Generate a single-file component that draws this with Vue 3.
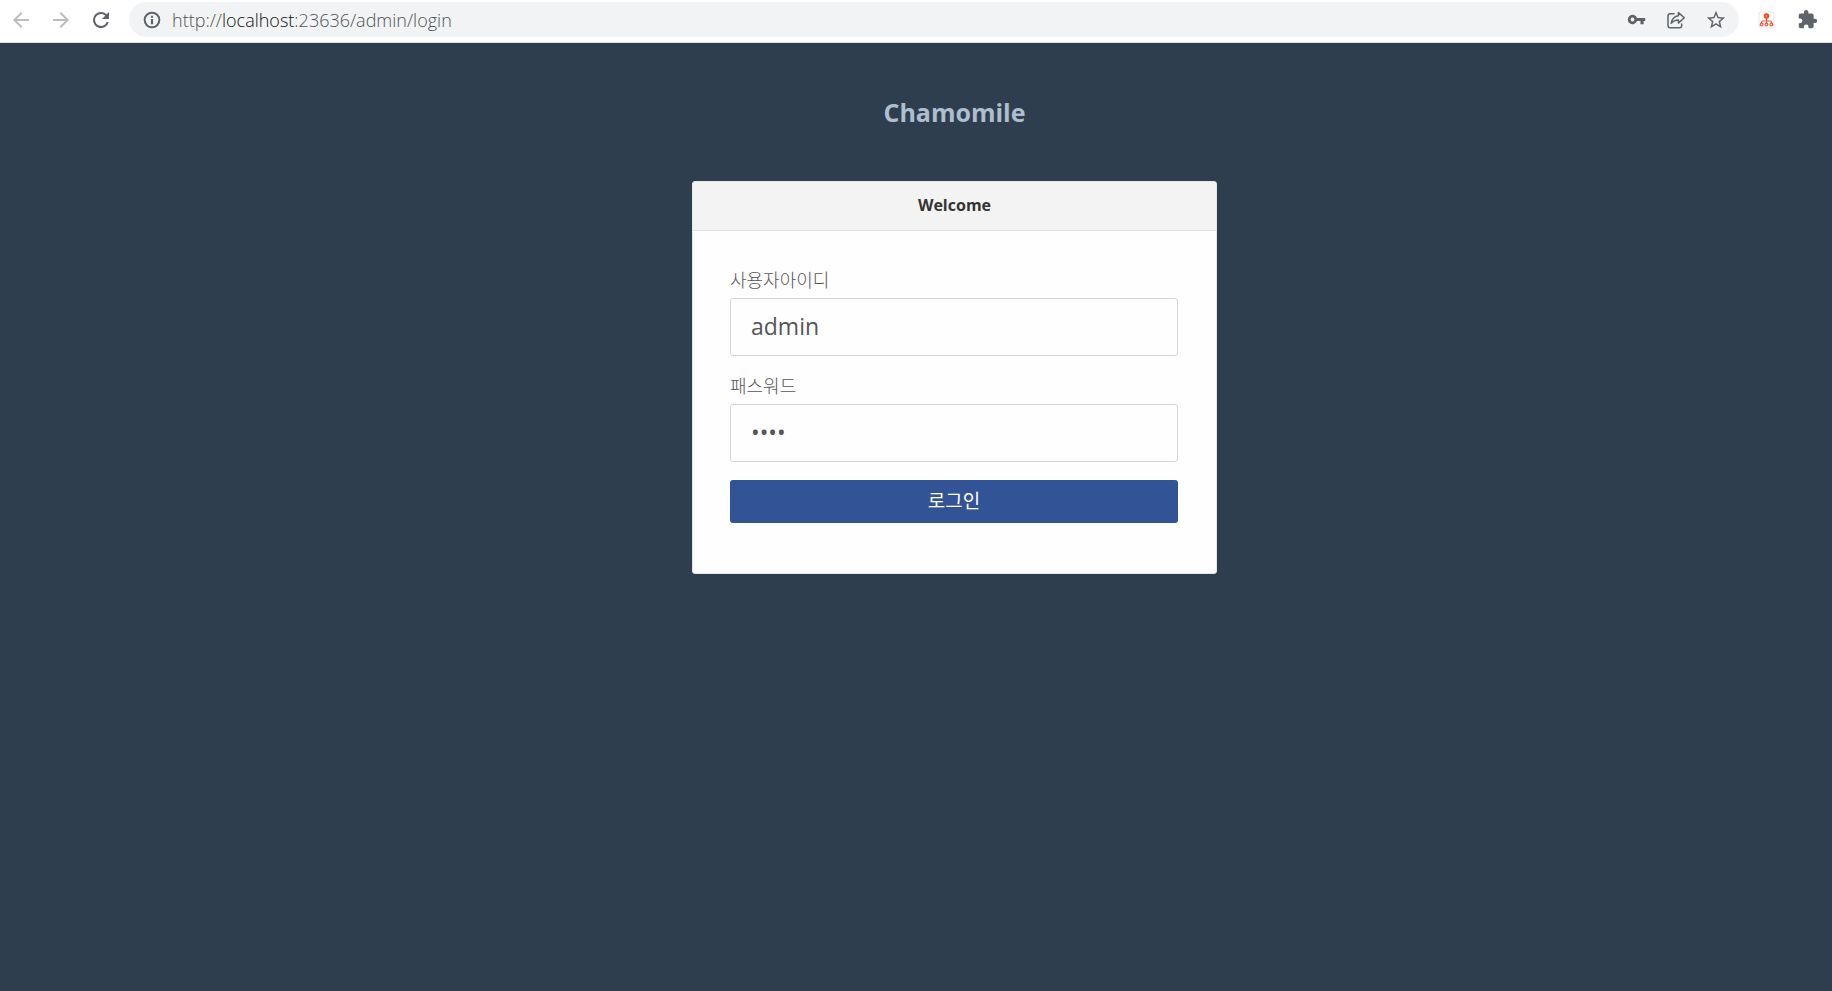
<script setup>
import { ref } from 'vue'

const userId = ref('admin')
const password = ref('1234')
</script>

<template>
  <div class="browser">
    <header class="toolbar">
      <button class="icon-button disabled" type="button" aria-label="Back">
        <svg width="24" height="24" viewBox="0 0 24 24"><path d="M20 11H7.83l5.59-5.59L12 4l-8 8 8 8 1.41-1.41L7.83 13H20z" /></svg>
      </button>
      <button class="icon-button disabled" type="button" aria-label="Forward">
        <svg width="24" height="24" viewBox="0 0 24 24"><path d="M12 4l-1.41 1.41L16.17 11H4v2h12.17l-5.58 5.59L12 20l8-8z" /></svg>
      </button>
      <button class="icon-button" type="button" aria-label="Reload">
        <svg width="24" height="24" viewBox="0 0 24 24"><path d="M17.65 6.35A7.96 7.96 0 0 0 12 4a8 8 0 1 0 7.73 10h-2.08A6 6 0 1 1 12 6c1.66 0 3.14.69 4.22 1.78L13 11h7V4z" /></svg>
      </button>
      <div class="address">
        <button class="icon-button" type="button" aria-label="Site information">
          <svg width="20" height="20" viewBox="0 0 24 24"><path d="M12 2a10 10 0 1 0 0 20 10 10 0 0 0 0-20zm0 17.600a7.600 7.600 0 1 1 0-15.200 7.600 7.600 0 0 1 0 15.200zM10.700 10.800h2.600V17h-2.600zM10.700 7h2.600v2.400h-2.600z" /></svg>
        </button>
        <div class="url">http://<span class="host">localhost</span>:23636/admin/login</div>
        <div class="actions">
          <button class="icon-button" type="button" aria-label="Passwords">
            <svg width="19" height="19" viewBox="0 0 24 24"><path d="M12.65 10A6 6 0 1 0 12.65 14H17v4h4v-4h2v-4zM7 14.4a2.4 2.4 0 1 1 0-4.8 2.4 2.4 0 0 1 0 4.8z" /></svg>
          </button>
          <button class="icon-button" type="button" aria-label="Share">
            <svg class="outline" width="20" height="20" viewBox="0 0 20 20"><path d="M8 3.800H4.300Q2 3.800 2 6.100v9.400q0 2.300 2.300 2.300h9.100q2.300 0 2.300-2.300v-1.500" /><path d="M12.400 2.600v3.200C8.600 6.200 6 8.800 5.200 13.400c2-2.500 4.200-3.500 7.200-3.500v3.200l5.900-5.300z" /></svg>
          </button>
          <button class="icon-button" type="button" aria-label="Bookmark">
            <svg width="22" height="22" viewBox="0 0 24 24"><path d="M22 9.24l-7.19-.62L12 2 9.19 8.63 2 9.24l5.46 4.73L5.82 21 12 17.27 18.18 21l-1.63-7.03zM12 15.4l-3.76 2.27 1-4.28-3.32-2.88 4.38-.38L12 6.1l1.71 4.04 4.38.38-3.32 2.88 1 4.28z" /></svg>
          </button>
        </div>
      </div>
      <button class="icon-button" type="button" aria-label="Site map extension">
        <svg class="extension" width="18" height="18" viewBox="0 0 18 18">
          <rect class="tile" x="1" y="1" width="15" height="16" rx="2" />
          <circle class="solid" cx="8.500" cy="5" r="2.800" />
          <path d="M8.500 7v5.500M3.600 12.500v-1.500q0-1 1-1h7.800q1 0 1 1v1.500" />
          <circle cx="3.600" cy="13.600" r="1.400" /><circle cx="8.500" cy="13.600" r="1.400" /><circle cx="13.400" cy="13.600" r="1.400" />
          <circle class="dot" cx="8.500" cy="5" r="0.800" />
        </svg>
      </button>
      <button class="icon-button" type="button" aria-label="Extensions">
        <svg width="21" height="21" viewBox="0 0 24 24"><path d="M20.500 11H19V7a2 2 0 0 0-2-2h-4V3.500a2.500 2.500 0 0 0-5 0V5H4a2 2 0 0 0-2 2v3.800h1.500a2.700 2.700 0 0 1 0 5.400H2V20a2 2 0 0 0 2 2h3.800v-1.500a2.700 2.700 0 0 1 5.400 0V22H17a2 2 0 0 0 2-2v-4h1.500a2.500 2.500 0 0 0 0-5z" /></svg>
      </button>
    </header>

    <main class="page">
      <h1 class="brand">Chamomile</h1>
      <section class="card">
        <h2 class="card-title">Welcome</h2>
        <form class="form" @submit.prevent>
          <div class="field">
            <label for="user-id">사용자아이디</label>
            <input id="user-id" v-model="userId" type="text" autocomplete="username">
          </div>
          <div class="field">
            <label for="password">패스워드</label>
            <input id="password" v-model="password" type="password" autocomplete="current-password">
          </div>
          <button class="submit" type="submit">로그인</button>
        </form>
      </section>
    </main>
  </div>
</template>

<style>
body {
  background: #2f3e4e;
}
</style>

<style scoped>
.browser {
  display: flex;
  flex-direction: column;
  min-height: 100vh;
  font-family: "Open Sans", "Noto Sans CJK KR", sans-serif;
}

.toolbar {
  display: flex;
  align-items: center;
  gap: 16px;
  box-sizing: border-box;
  height: 43px;
  padding: 0 13px 3px 9px;
  border-bottom: 1px solid #dfe3e3;
  background: #fff;
}

.icon-button {
  display: flex;
  align-items: center;
  justify-content: center;
  flex: none;
  width: 24px;
  height: 24px;
  padding: 0;
  border: 0;
  background: none;
  color: #5f6368;
}

.icon-button svg {
  fill: currentColor;
}

.icon-button.disabled {
  color: #babcbe;
}

.icon-button .outline {
  fill: none;
  stroke: currentColor;
  stroke-width: 1.5;
  stroke-linejoin: round;
  stroke-linecap: round;
}

.icon-button .extension {
  fill: none;
  stroke: #f0583a;
  stroke-width: 1.2;
}

.extension .tile {
  fill: #fff;
  stroke: #e6e6e6;
  stroke-width: 1;
}

.extension .solid {
  fill: #f0482a;
  stroke: none;
}

.extension .dot {
  fill: #fbb4a4;
  stroke: none;
}

.address {
  display: flex;
  align-items: center;
  flex: 1;
  gap: 8px;
  box-sizing: border-box;
  height: 35px;
  padding: 0 11px;
  border-radius: 18px;
  background: #f1f3f4;
}

.url {
  flex: 1;
  font-size: 18px;
  line-height: 24px;
  font-weight: 300;
  color: #505458;
}

.host {
  color: #101114;
}

.actions {
  display: flex;
  gap: 16px;
}

.page {
  display: flex;
  flex-direction: column;
  align-items: center;
  flex: 1;
  padding: 48px 0 48px 77px;
  background: #2f3e4e;
}

.brand {
  margin: 0 0 48px;
  font-size: 25px;
  line-height: 42px;
  font-weight: 700;
  color: #adbece;
}

.card {
  box-sizing: border-box;
  width: 100%;
  max-width: 525px;
  border: 1px solid #e4e6e7;
  border-radius: 3px;
  background: #fefefe;
  overflow: hidden;
}

.card-title {
  margin: 0;
  padding: 11px 12px 13px;
  border-bottom: 1px solid #e2e2e2;
  background: #f3f3f3;
  font-size: 16px;
  line-height: 24px;
  font-weight: 700;
  text-align: center;
  color: #333;
}

.form {
  padding: 37px 38px 50px 37px;
}

.field {
  display: flex;
  flex-direction: column;
  margin-bottom: 18px;
}

.field label {
  margin-bottom: 6px;
  font-size: 18px;
  line-height: 24px;
  font-weight: 300;
  color: #555;
}

.field input {
  box-sizing: border-box;
  width: 100%;
  height: 58px;
  padding: 0 20px 2px;
  border: 1px solid #d6d6d6;
  border-radius: 3px;
  background: #fefefe;
  font: inherit;
  font-size: 23px;
  color: #555;
  outline: none;
}

.submit {
  width: 100%;
  height: 43px;
  padding: 0 0 4px;
  border: 0;
  border-radius: 3px;
  background: #325396;
  font: inherit;
  font-size: 19px;
  color: #fff;
}
</style>
